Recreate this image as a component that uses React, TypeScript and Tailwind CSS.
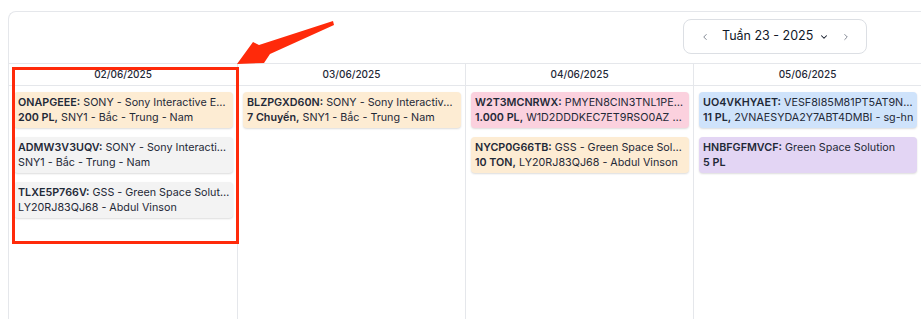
import { ChevronLeft, ChevronRight, ChevronDown } from "lucide-react";

type Shipment = {
  code: string;
  title: string;
  qty?: string;
  detail?: string;
  color: string;
};

const days: { date: string; items: Shipment[] }[] = [
  {
    date: "02/06/2025",
    items: [
      { code: "ONAPGEEE", title: "SONY - Sony Interactive Entertainment", qty: "200 PL", detail: "SNY1 - Bắc - Trung - Nam", color: "bg-[#fdecd3]" },
      { code: "ADMW3V3UQV", title: "SONY - Sony Interactive Entertainment", detail: "SNY1 - Bắc - Trung - Nam", color: "bg-[#f3f3f3]" },
      { code: "TLXE5P766V", title: "GSS - Green Space Solution", detail: "LY20RJ83QJ68 - Abdul Vinson", color: "bg-[#f3f3f3]" },
    ],
  },
  {
    date: "03/06/2025",
    items: [
      { code: "BLZPGXD60N", title: "SONY - Sony Interactive Entertainment", qty: "7 Chuyến", detail: "SNY1 - Bắc - Trung - Nam", color: "bg-[#fdecd3]" },
    ],
  },
  {
    date: "04/06/2025",
    items: [
      { code: "W2T3MCNRWX", title: "PMYEN8CIN3TNL1PEQ2K", qty: "1.000 PL", detail: "W1D2DDDKEC7ET9RSO0AZ - hcm", color: "bg-[#fbd1de]" },
      { code: "NYCP0G66TB", title: "GSS - Green Space Solution", qty: "10 TON", detail: "LY20RJ83QJ68 - Abdul Vinson", color: "bg-[#fdecd3]" },
    ],
  },
  {
    date: "05/06/2025",
    items: [
      { code: "UO4VKHYAET", title: "VESF8I85M81PT5AT9NQ2", qty: "11 PL", detail: "2VNAESYDA2Y7ABT4DMBI - sg-hn", color: "bg-[#cfe3fb]" },
      { code: "HNBFGFMVCF", title: "Green Space Solution", qty: "5 PL", color: "bg-[#e3d5f4]" },
    ],
  },
];

const ShipmentCard = ({ s }: { s: Shipment }) => (
  <div className={`${s.color} rounded-[4px] pl-[4px] pr-[3px] py-[3px] shadow-[0_1px_2px_rgba(0,0,0,0.14)] text-[10.75px] leading-[15px] text-[#1f2937]`}>
    <div className="truncate">
      <span className="font-semibold">{s.code}:</span> {s.title}
    </div>
    <div className="truncate">
      {s.qty && <span className="font-semibold">{s.qty}{s.detail ? "," : ""}</span>}
      {s.qty && s.detail ? " " : ""}
      {s.detail}
    </div>
  </div>
);

export default function App() {
  return (
    <div className="relative w-[921px] h-[319px] overflow-hidden bg-white" style={{ fontFamily: "Inter, 'Noto Sans', sans-serif" }}>
      <div className="ml-2 mt-[11px] w-[913px] border-l border-t border-[#e5e7eb] rounded-tl-lg">
        {/* Header */}
        <div className="h-[51px] flex justify-end items-start pt-[7px] pr-[54px]">
          <div className="h-[35px] w-[184px] flex items-center rounded-lg border border-[#dcdfe4] pl-[16px] text-[#111827]">
            <ChevronLeft size={10} strokeWidth={2} className="text-[#6b7280]" />
            <span className="ml-[12px] text-[12.5px]">Tuần 23 - 2025</span>
            <ChevronDown size={10} strokeWidth={2.5} className="ml-[6px]" />
            <ChevronRight size={10} strokeWidth={2} className="ml-[12px] text-[#6b7280]" />
          </div>
        </div>

        {/* Day columns */}
        <div className="grid grid-cols-4 border-t border-[#e5e7eb]">
          {days.map((d, i) => (
            <div key={d.date} className={`flex flex-col ${i > 0 ? "border-l border-[#e5e7eb]" : ""}`}>
              <div className="h-[22px] border-b border-[#e5e7eb] flex items-center justify-center text-[10px] font-medium text-[#1f2937]">
                {d.date}
              </div>
              <div className="h-[233px] pl-[5px] pr-[4px] pt-[6px] flex flex-col gap-[9px]">
                {d.items.map((s) => (
                  <ShipmentCard key={s.code} s={s} />
                ))}
              </div>
            </div>
          ))}
        </div>
      </div>

      {/* Annotation: red box + arrow */}
      <div className="absolute left-[12px] top-[67px] w-[227px] h-[177px] border-[3px] border-[#ff2a0a] pointer-events-none" />
      <svg className="absolute left-0 top-0 pointer-events-none" width="921" height="319">
        <polygon points="333,21 334,25 270,54 264,63 237,64 253,42 259,45" fill="#ff2a0a" />
      </svg>
    </div>
  );
}
